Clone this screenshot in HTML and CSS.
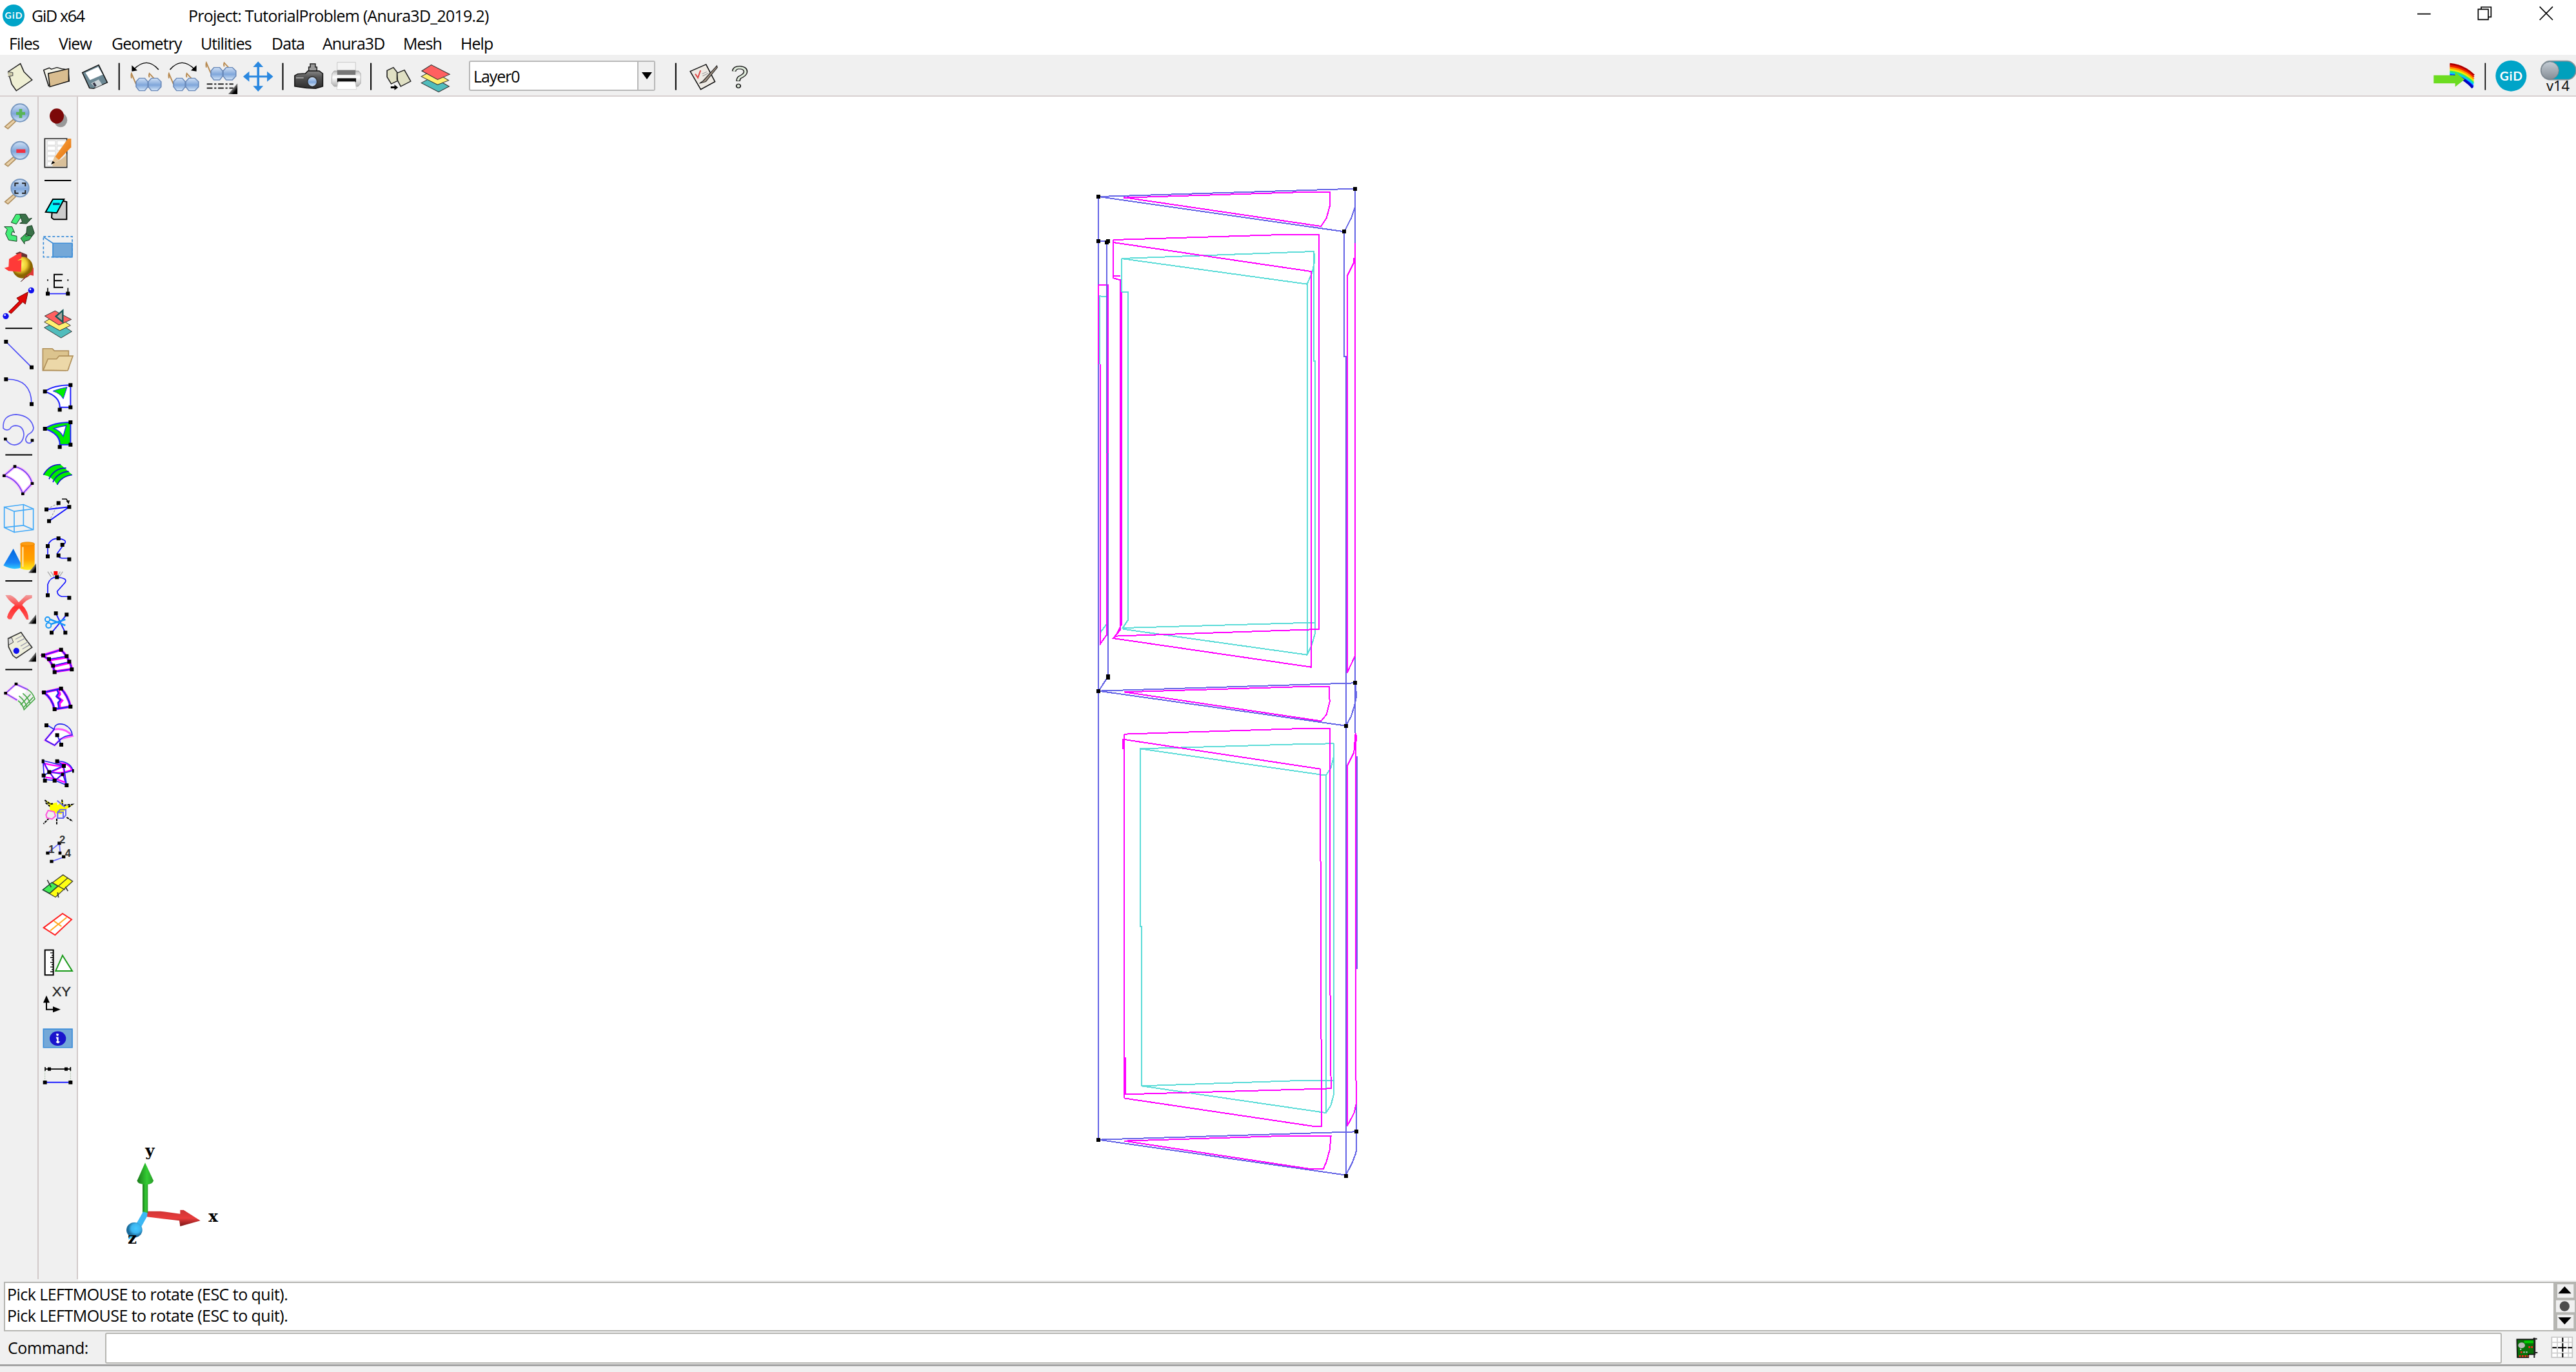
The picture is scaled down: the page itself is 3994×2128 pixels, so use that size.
FILE: index.html
```html
<!DOCTYPE html>
<html lang="en">
<head>
<meta charset="utf-8">
<title>GiD x64</title>
<link rel="stylesheet" href="styles.css">
</head>
<body>
<svg class="defs" aria-hidden="true">
  <defs>
    <linearGradient id="lens" x1="0" y1="0" x2="0" y2="1"><stop offset="0" stop-color="#cfe0f5"/><stop offset=".55" stop-color="#7fa6da"/><stop offset="1" stop-color="#d5e6f8"/></linearGradient>
    <linearGradient id="cone" x1="0" y1="0" x2="0" y2="1"><stop offset="0" stop-color="#06d"/><stop offset=".7" stop-color="#1b84f5"/><stop offset="1" stop-color="#2cc8ff"/></linearGradient>
    <linearGradient id="cyl" x1="0" y1="0" x2="0" y2="1"><stop offset="0" stop-color="#ff8c00"/><stop offset=".6" stop-color="#ffa200"/><stop offset="1" stop-color="#ffee20"/></linearGradient>
    <linearGradient id="cross" x1="0" y1="0" x2="0" y2="1"><stop offset="0" stop-color="#f0a0a0"/><stop offset=".5" stop-color="#ff3030"/><stop offset="1" stop-color="#f55"/></linearGradient>
    <linearGradient id="corner" x1="0" y1="0" x2="1" y2="1"><stop offset=".4" stop-color="#aaa"/><stop offset=".75" stop-color="#000"/></linearGradient>
    <linearGradient id="pencil" x1="0" y1="0" x2="1" y2="1"><stop offset="0" stop-color="#ffb050"/><stop offset="1" stop-color="#e06800"/></linearGradient>
    <linearGradient id="knob" x1="0" y1="0" x2="0" y2="1"><stop offset="0" stop-color="#c4ccd4"/><stop offset="1" stop-color="#858d95"/></linearGradient>
    <linearGradient id="printer" x1="0" y1="0" x2="0" y2="1"><stop offset="0" stop-color="#bbb"/><stop offset=".4" stop-color="#fff"/><stop offset="1" stop-color="#b0b0b0"/></linearGradient>
    <linearGradient id="camera" x1="0" y1="0" x2="0" y2="1"><stop offset="0" stop-color="#888"/><stop offset=".35" stop-color="#555"/><stop offset="1" stop-color="#2c2c2c"/></linearGradient>
    <linearGradient id="green" x1="0" y1="0" x2="1" y2="0"><stop offset="0" stop-color="#1a7a1a"/><stop offset=".6" stop-color="#3c3"/><stop offset="1" stop-color="#2a9a2a"/></linearGradient>
    <linearGradient id="red" x1="0" y1="0" x2="0" y2="1"><stop offset="0" stop-color="#c33"/><stop offset=".5" stop-color="#e83c3c"/><stop offset="1" stop-color="#7a1616"/></linearGradient>
    <radialGradient id="sun" cx=".4" cy=".35"><stop offset="0" stop-color="#ffff70"/><stop offset=".6" stop-color="#f0cc30"/><stop offset="1" stop-color="#8a6400"/></radialGradient>
    <radialGradient id="blueball" cx=".6" cy=".4"><stop offset="0" stop-color="#44c8ff"/><stop offset=".6" stop-color="#3cb4ee"/><stop offset="1" stop-color="#1a6a9a"/></radialGradient>
    <g id="magnifier">
      <path d="M63 120l-40 34 14 10 36-34z" fill="#e8d0a8" stroke="#b09060" stroke-width="5"/>
      <circle cx="93" cy="90" r="41" fill="url(#lens)" stroke="#7898c0" stroke-width="6"/>
    </g>
    <g id="glasses">
      <path d="M533 392l-18-50q-2 6 0 22M607 370l-22-28q-3 8 0 18" fill="none" stroke="#b88a50" stroke-width="5"/>
      <path d="M545 364h22l12 16v24l-12 18h-22l-12-18v-24zM593 364h24l14 16v24l-14 18h-24l-12-18v-24z" fill="url(#lens)" stroke="#6888b8" stroke-width="4"/>
    </g>
    <g id="stack">
      <path d="M206 1090l78 48 50-30-70-46z" fill="#50bcbc"/><path d="M206 1064l72 40 50-24-70-46z" fill="#fff070"/><path d="M208 1036l66 42 58-26-76-40z" fill="#ff6060"/>
    </g>
  </defs>
</svg>
<div class="window">
  <header class="titlebar">
    <svg class="logo-small" viewBox="0 0 34 40"><ellipse cx="17" cy="20" rx="17" ry="17" fill="#00a4c8"/><text x="17" y="25" text-anchor="middle" textLength="27" class="logo-text" font-size="14">GiD</text></svg>
    <span class="app-name">GiD x64</span>
    <span class="project">Project: TutorialProblem (Anura3D_2019.2)</span>
    <svg class="controls" viewBox="205 0 631 141"><g fill="none" stroke="#000" stroke-width="5"><path d="M205 65h62M488 43h47v48h-47zM502 43V33h46v46h-12M774 31l61 62M835 31l-61 62"/></g></svg>
  </header>
  <nav class="menubar">
    <span class="m-files">Files</span><span class="m-view">View</span><span class="m-geometry">Geometry</span><span class="m-utilities">Utilities</span><span class="m-data">Data</span><span class="m-anura">Anura3D</span><span class="m-mesh">Mesh</span><span class="m-help">Help</span>
  </nav>
  <div class="toolbar">
    <svg class="w1" viewBox="0 255 148 189" preserveAspectRatio="none"><path d="M32 334l48-38 14 38 32 38-62 50-18-30z" fill="#efefd4" stroke="#222" stroke-width="4"/><path d="M32 334l18 4v14l-18 4" fill="#ccc9a8" stroke="#555" stroke-width="3"/></svg>
    <svg class="w2" viewBox="148 255 152 189" preserveAspectRatio="none"><path d="M190 402l-20-76 22-10 8 6 22-8 18 6 26 4 4 56" fill="#f4f4ea" stroke="#111" stroke-width="4"/><path d="M188 342l80-22v58l-74 26z" fill="#d9bd90" stroke="#111" stroke-width="4"/></svg>
    <svg class="w3" viewBox="300 255 145 189" preserveAspectRatio="none"><path d="M322 338l64-36 34 82-54 28-16-2z" fill="#6c8894" stroke="#111" stroke-width="4"/><path d="M334 338l50-27 18 36-50 26z" fill="#fff"/><path d="M356 388l30-18 14 24-26 14z" fill="#ccd4d8"/><path d="M362 388l8-5 8 16-7 5z" fill="#334"/></svg>
    <svg class="w4" viewBox="445 255 45 189" preserveAspectRatio="none"><path d="M467 293v126" stroke="#000" stroke-width="5"/></svg>
    <svg class="w5" viewBox="490 255 157 189" preserveAspectRatio="none"><use href="#glasses"/><path d="M621 324q-46-64-98 0" fill="none" stroke="#000" stroke-width="4"/><path d="M516 304v28l22-4z"/></svg>
    <svg class="w6" viewBox="647 255 148 189" preserveAspectRatio="none"><use href="#glasses" x="147"/><path d="M666 324q46-64 98 0" fill="none" stroke="#000" stroke-width="4"/><path d="M770 304v28l-22-4z"/></svg>
    <svg class="w6" viewBox="795 255 148 189" preserveAspectRatio="none"><use href="#glasses" x="295" y="-50"/><path d="M812 391h104M812 410h104" stroke="#000" stroke-width="5" stroke-dasharray="22 7 8 7"/><path d="M932 388v50h-36z" fill="url(#corner)"/></svg>
    <svg class="w7" viewBox="943 255 142 189" preserveAspectRatio="none"><path d="M1012 300v112M966 356h92" stroke="#2a88e0" stroke-width="9"/><path d="M1012 286l20 26h-40zM1012 426l20-26h-40zM953 356l24-24v48zM1071 356l-24-24v48z" fill="#2a88e0"/></svg>
    <svg class="w8" viewBox="1085 255 50 189" preserveAspectRatio="none"><path d="M1109 293v126" stroke="#000" stroke-width="5"/></svg>
    <svg class="w2" viewBox="1135 255 152 189" preserveAspectRatio="none"><path d="M1210 336v-24h6v-15h20v15h6v24" fill="#999" stroke="#222" stroke-width="4"/><path d="M1155 352l12-8 30-2 10-12h44l14 12v60l-28 10-36-2-46-8z" fill="url(#camera)" stroke="#111" stroke-width="4"/><path d="M1160 362h30" stroke="#aaa" stroke-width="5"/><ellipse cx="1224" cy="380" rx="21" ry="26" fill="#333"/><ellipse cx="1224" cy="380" rx="17" ry="21" fill="url(#lens)"/></svg>
    <svg class="w7" viewBox="1289 255 142 189" preserveAspectRatio="none"><path d="M1304 342l8-12h96l8 12v46l-10 14h-94l-10-14z" fill="url(#printer)" stroke="#999" stroke-width="2"/><path d="M1324 290h72v38h-72z" fill="#f4f4f4" stroke="#bbb" stroke-width="2"/><path d="M1324 326h72v22h-72z" fill="#777"/><path d="M1324 364h74v18h-74z" fill="#111"/><path d="M1328 380h66l6 36h-78z" fill="#fff" stroke="#ccc" stroke-width="2"/></svg>
    <svg class="w8" viewBox="1431 255 49 189" preserveAspectRatio="none"><path d="M1456 293v126" stroke="#000" stroke-width="5"/></svg>
    <svg class="w9" viewBox="13 255 147 189" preserveAspectRatio="none"><path d="M50 328l24-14 14 22 2 40-24 14-16-32zM88 340l28-14 24 52-38 24-14-32z" fill="#e0e0c4" stroke="#222" stroke-width="4"/><path d="M64 402h14v-8l14 13-14 12v-8H64z"/></svg>
    <svg class="w10" viewBox="160 255 170 189" preserveAspectRatio="none"><g stroke="#333" stroke-width="3"><path d="M180 386l66 42 40-26-64-44z" fill="#50bcbc"/><path d="M180 356l62 38 42-20-62-46z" fill="#fff070"/><path d="M182 330l60 40 46-24-70-44z" fill="#ff6060"/></g></svg>
    <div class="combo"><span>Layer0</span><i><svg viewBox="0 0 26 55"><path d="M5 22h16l-8 11z"/></svg></i></div>
    <svg class="w11" viewBox="1070 255 260 189" preserveAspectRatio="none"><path d="M1148 293v126" stroke="#000" stroke-width="5"/><path d="M1203 332l60-32 34 80-54 36z" fill="#eeeae4" stroke="#111" stroke-width="4"/><path d="M1222 344l10 18 10-34" fill="none" stroke="#d44" stroke-width="5"/><path d="M1248 344l18-10M1250 354l22-14" stroke="#999" stroke-width="3"/><path d="M1304 306l-52 70-14 12 24-8 44-66z" fill="#a09080" stroke="#222" stroke-width="3"/></svg>
    <svg class="w12" viewBox="1330 255 110 189" preserveAspectRatio="none"><path d="M1369 332q2-18 22-18 22 2 22 20 0 14-22 26-6 6-6 18" fill="none" stroke="#111" stroke-width="16"/><path d="M1369 332q2-18 22-18 22 2 22 20 0 14-22 26-6 6-6 16" fill="none" stroke="#dfeadb" stroke-width="9"/><ellipse cx="1386" cy="400" rx="8" ry="9" fill="#dfeadb" stroke="#111" stroke-width="4"/></svg>
    <svg class="right-tools" viewBox="270 255 672 189" preserveAspectRatio="none">
      <g fill="none" stroke-width="11"><path d="M355 299q60 4 112 52" stroke="#b00000"/><path d="M355 308q60 4 111 52" stroke="#f02000"/><path d="M355 317q60 4 111 52" stroke="#ff9800"/><path d="M355 326q60 4 110 52" stroke="#f0f000"/><path d="M355 334q60 4 110 52" stroke="#30e870"/><path d="M355 342q60 4 109 52" stroke="#00c8ff"/><path d="M355 350q60 4 108 52" stroke="#1030ff"/><path d="M372 352q50 10 90 56" stroke="#0000c0"/></g>
      <path d="M280 350h100v-14l44 34-44 34v-16H280z" fill="#6cdc20"/><path d="M520 293v126" stroke="#000" stroke-width="5"/><circle cx="640" cy="353" r="72" fill="#00a4c8"/><text x="640" y="374" text-anchor="middle" textLength="106" class="logo-text" font-size="58">GiD</text><rect x="779" y="284" width="163" height="87" rx="43" fill="#00a0bc" stroke="#8a949c" stroke-width="5"/><circle cx="821" cy="328" r="41" fill="url(#knob)" stroke="#78828a" stroke-width="3"/><text x="804" y="424" textLength="108" class="version" font-size="66">v14</text></svg>
  </div>
  <main class="workspace">
    <aside class="tools">
      <svg viewBox="0 18 177 174"><use href="#magnifier"/><path d="M96 72v42M75 93h42" stroke="#58b458" stroke-width="14"/></svg>
      <svg viewBox="0 192 177 174"><use href="#magnifier" y="175"/><path d="M76 268h42" stroke="#f03040" stroke-width="17"/></svg>
      <svg viewBox="0 366 177 174"><use href="#magnifier" y="350"/><path d="M70 432v-14h16M102 418h16v14M118 450v14h-16M86 464H70v-14" fill="none" stroke="#222" stroke-width="6"/></svg>
      <svg viewBox="0 540 177 174"><g stroke="#163b20" stroke-width="3"><path d="M52 600l22-38h46l-18 6-26 40z" fill="#44ee78"/><path d="M92 562h28l14 22 14-4-24 26-32-2 12-6z" fill="#3a7048"/><path d="M20 620h36l12 28-10-6-6 16 26 6v24l-38-6-14-30 8-20z" fill="#44ee78"/><path d="M96 674l26-24-2 14 34-8-18 26-22 6v12z" fill="#38b458"/><path d="M126 620l22-6 12 36-12 14-26-8z" fill="#3a7048"/></g></svg>
      <svg viewBox="0 714 177 174"><path d="M72 744l20-8 34 14 2 40z" fill="#633"/><ellipse cx="105" cy="810" rx="48" ry="50" fill="url(#sun)"/><path d="M20 812l20-6 2-36 40-24 18-4v24l-20 12 20-4-2 56-58-4z" fill="#ff3a38"/><path d="M156 808v40l-20-4-38 32 20-26 26-18z" fill="#e03838"/><path d="M96 876l30-28" stroke="#333" stroke-width="3"/></svg>
      <svg viewBox="0 888 177 174"><path d="M40 1016l50-50-12-14 52-28-12 56-12-10-54 54z" fill="#e00808" stroke="#700" stroke-width="3"/><circle cx="27" cy="1036" r="14" fill="#11e"/><circle cx="23" cy="1031" r="4" fill="#fff"/><circle cx="145" cy="916" r="14" fill="#11e"/><circle cx="141" cy="911" r="4" fill="#fff"/></svg>
      <svg class="rule" viewBox="0 1062 177 66"><path d="M25 1093h125" stroke="#000" stroke-width="6"/></svg>
      <svg viewBox="0 1128 177 174"><path d="M28 1155l119 119" stroke="#4848f8" stroke-width="5"/><path d="M19 1146h18v18H19zM138 1265h18v18h-18z"/></svg>
      <svg viewBox="0 1302 177 174"><path d="M28 1330q118-4 119 115" fill="none" stroke="#4848f8" stroke-width="5"/><path d="M19 1321h18v18H19zM138 1436h18v18h-18z"/></svg>
      <svg viewBox="0 107.400 177 168.400"><path d="M25 236q18 28 42 28 40-4 44-48-2-42-40-42-18 2-24 14-16 14-32-2-4-62 60-64 70 6 81 62 0 18-26 32-20 26-2 38 18 6 22-12" fill="none" stroke="#5a5af4" stroke-width="5"/><path d="M18 230h14v13H18zM143 236h14v13h-14z"/></svg>
      <svg class="rule" viewBox="0 275.900 177 63.900"><path d="M25 306h125" stroke="#000" stroke-width="6"/></svg>
      <svg viewBox="0 339.800 177 168.400"><path d="M19 399l50-42q62 16 81 78l-44 48q-24-66-87-84z" fill="#fff" stroke="#f9f" stroke-width="12"/><path d="M19 399l50-42q62 16 81 78l-44 48q-24-66-87-84z" fill="none" stroke="#44e" stroke-width="4"/><path d="M12 393h14v13H12zM62 350h14v13H62zM143 429h14v13h-14zM99 477h14v13H99z"/></svg>
      <svg viewBox="0 508.200 177 168.400"><path d="M20 540l46 20v97l-46-22zM66 560l89-12v97l-89 12M20 540l89-12 46 20M109 528v97l46 20M109 625l-89 10" fill="none" stroke="#44aaf8" stroke-width="5"/></svg>
      <svg viewBox="0 676.600 177 168.400"><path d="M62 728l44 86q-46 18-90-8z" fill="url(#cone)"/><path d="M95 706v114q34 14 66 0V706z" fill="url(#cyl)"/><ellipse cx="128" cy="706" rx="33" ry="9" fill="#ff9c10" stroke="#d88000" stroke-width="2"/><path d="M106 720v92" stroke="#ffdc90" stroke-width="8"/><path d="M168 796v44h-36z" fill="url(#corner)"/></svg>
      <svg class="rule" viewBox="0 845 177 63.900"><path d="M25 874h125" stroke="#000" stroke-width="6"/></svg>
      <svg viewBox="0 909 177 168.400"><path d="M25 936h24q22 10 38 34l34-34h28v14q-26 8-46 32 30 30 30 68h-10q-14-26-34-52-22 20-36 50-16 4-20-10 8-30 36-56-30-20-44-46z" fill="url(#cross)"/><path d="M168 1026v44h-36z" fill="url(#corner)"/></svg>
      <svg viewBox="0 1077.400 177 168.400"><path d="M38 1132l60-28 22 32 29 38-73 50-16-12-20-40z" fill="#efefdc" stroke="#333" stroke-width="5"/><path d="M72 1136l34-18M80 1150l36-18M96 1168l34-20M104 1182l34-20" stroke="#99a" stroke-width="4"/><path d="M40 1134l14-6 8 22-20 12" fill="#ddd" stroke="#444" stroke-width="3"/><circle cx="76" cy="1190" r="14" fill="#11e"/><path d="M168 1196v44h-36z" fill="url(#corner)"/></svg>
      <svg class="rule" viewBox="0 1245.800 177 63.900"><path d="M25 1273h125" stroke="#000" stroke-width="6"/></svg>
      <svg viewBox="0 1309.700 177 168.400"><path d="M80 1412l-54-32 48-43 56 26" fill="#fff" stroke="#f8f" stroke-width="10"/><path d="M80 1412l-54-32 48-43 56 26" fill="none" stroke="#55e" stroke-width="4"/><path d="M84 1414q20 14 28 42l50-50q-10-30-34-44M96 1434l46-50M108 1448l46-50M88 1392q28 22 36 50M106 1380q26 22 34 46" fill="none" stroke="#48a848" stroke-width="5"/><path d="M19 1373h14v13H19zM68 1330h14v13H68z"/></svg>
    </aside>
    <aside class="tools tools-b">
      <svg class="t58" viewBox="180 18 177 174"><ellipse cx="282" cy="124" rx="31" ry="33" fill="#999"/><ellipse cx="264" cy="105" rx="33" ry="35" fill="#7c0808"/></svg>
      <svg class="t58" viewBox="180 192 177 174"><path d="M208 210h103v134H208z" fill="#eee" stroke="#222" stroke-width="5"/><path d="M220 220h38v20h-38zM266 220h38v20h-38zM220 246h38v18h-38zM266 246h38v18h-38zM220 270h38v18h-38zM220 294h34v18h-34zM220 318h38v18h-38z" fill="#fff" stroke="#ccc" stroke-width="2"/><path d="M244 326q50-20 66-44v58h-66z" fill="#d9c09a"/><path d="M240 328l16-34 60-84h15v40l-56 58z" fill="url(#pencil)"/><path d="M240 328l14-36 22 18z" fill="#e6c69a"/><path d="M237 331l8-17 11 8z"/></svg>
      <svg class="rule29" viewBox="180 366 177 87"><path d="M207 405h124" stroke="#000" stroke-width="6"/></svg>
      <svg viewBox="180 453 177 175.200"><path d="M246 500l14-8 50 12v82h-60l-10-8z" fill="#ccc" stroke="#000" stroke-width="6"/><path d="M212 552l34-60h52l-34 64z" fill="#00f8f8" stroke="#000" stroke-width="6"/><path d="M246 514h32" stroke="#047" stroke-width="10"/></svg>
      <svg viewBox="180 628.200 177 175.200"><path d="M202 667h134v95H202z" fill="none" stroke="#3a8cd8" stroke-width="5" stroke-dasharray="12 9"/><path d="M204 670l42 28" stroke="#3a8cd8" stroke-width="5"/><path d="M246 698h90v64h-90z" fill="#74a8d8" stroke="#3a8cd8" stroke-width="5"/></svg>
      <svg viewBox="180 803.400 177 175.200"><path d="M292 842h-40v60h42M252 870h36" fill="none" stroke="#000" stroke-width="6"/><path d="M222 864v8M316 864v8M222 904v20M316 904v20" stroke="#000" stroke-width="5"/><path d="M222 931h94" stroke="#22f" stroke-width="5"/><path d="M213 922h18v18h-18zM307 922h18v18h-18z"/></svg>
      <svg viewBox="180 978.600 177 175.200"><g stroke="#333" stroke-width="3"><use href="#stack"/></g><path d="M292 1010v54l-32-26z" fill="#a8a8a0" stroke="#165858" stroke-width="7"/></svg>
      <svg viewBox="180 1153.800 177 175.200"><path d="M199 1186h44l10 10h66v84l-12 8H199z" fill="#dcc48e" stroke="#b0905a" stroke-width="5"/><path d="M201 1286l22-52h40l12-14h64l-24 68z" fill="#ecd8a8" stroke="#b0905a" stroke-width="5"/></svg>
      <svg viewBox="180 -34.800 177 169.600"><path d="M209 20q40-30 119-30v104h-50q2-50-69-74z" fill="#fff" stroke="#22f" stroke-width="6"/><path d="M246 18q32-12 66-18l-18 54q-14-26-48-36z" fill="#0e0" stroke="#22f" stroke-width="3"/><path d="M200 11h18v18h-18zM319-19h18v18h-18zM319 85h18v18h-18zM269 96h18v18h-18z"/></svg>
      <svg viewBox="180 134.700 177 169.600"><path d="M209 189q40-30 119-30v104h-50q2-50-69-74z" fill="#0e0" stroke="#22f" stroke-width="6"/><path d="M250 188q32-10 58-14l-14 50q-14-26-44-36z" fill="#fff" stroke="#22f" stroke-width="4"/><path d="M200 180h18v18h-18zM319 150h18v18h-18zM319 254h18v18h-18zM269 265h18v18h-18z"/></svg>
      <svg viewBox="180 304.300 177 169.600"><path d="M202 396q28-50 80-48l54 48q-44 6-70 46-24-40-64-46z" fill="#0e0"/><path d="M202 396q28-50 80-48M228 416q24-52 80-52M246 430q22-46 74-50M266 442q20-40 70-46" fill="none" stroke="#11c" stroke-width="5"/></svg>
      <svg viewBox="180 473.900 177 169.600"><path d="M228 608l44-84-56 28" fill="none" stroke="#aaa" stroke-width="4" stroke-dasharray="10 6"/><path d="M216 553l106-12-94 66" fill="none" stroke="#11f" stroke-width="6"/><path d="M288 504h20l10 14" fill="none" stroke="#000" stroke-width="5"/><path d="M207 544h18v18h-18zM263 514h18v18h-18zM313 532h18v18h-18zM219 598h18v18h-18zM308 514l16-4-4 18z"/></svg>
      <svg viewBox="180 643.500 177 169.600"><path d="M222 764v-48q10-36 50-36 44 8 28 24l-34 46q2 20 22 22h34" fill="none" stroke="#11f" stroke-width="5"/><path d="M213 707h18v18h-18zM263 671h18v18h-18zM281 701h18v18h-18zM213 755h18v18h-18zM263 750h18v18h-18zM313 768h18v18h-18z"/></svg>
      <svg viewBox="180 813.100 177 169.600"><path d="M222 830l16 24M236 830l16 24M292 830l-16 24M280 830l-14 24" stroke="#aaa" stroke-width="4"/><path d="M222 940v-50q10-34 40-34 62 4 36 30l-32 36q2 20 22 24h34" fill="none" stroke="#11f" stroke-width="5"/><path d="M213 931h18v18h-18zM256 847h18v18h-18zM313 943h18v18h-18z"/><path d="M250 828h18v18h-18z" fill="red"/></svg>
      <svg viewBox="180 982.700 177 169.600"><path d="M260 1020l44 90M310 1026l-70 84" stroke="#22f" stroke-width="6"/><circle cx="221" cy="1048" r="11" fill="none" stroke="#1898f8" stroke-width="6"/><circle cx="226" cy="1076" r="12" fill="none" stroke="#1898f8" stroke-width="6"/><path d="M234 1048l70 28M238 1070l66-22" stroke="#1898f8" stroke-width="8"/><path d="M251 1011h18v18h-18zM301 1017h18v18h-18zM231 1101h18v18h-18zM295 1101h18v18h-18z"/></svg>
      <svg viewBox="180 1152.300 177 169.600"><path d="M200 1208l84-26q40 40 50 90l-80 12q-10-50-54-76zM228 1230l82-14M246 1260l76-18" fill="#fff" stroke="#f0f" stroke-width="12"/><path d="M200 1208l84-26q40 40 50 90l-80 12q-10-50-54-76zM228 1226l82-14M246 1256l76-18" fill="none" stroke="#22e" stroke-width="5"/><path d="M192 1199h18v18h-18zM275 1173h18v18h-18zM301 1203h18v18h-18zM313 1228h18v18h-18zM325 1264h18v18h-18zM245 1277h18v18h-18zM219 1216h18v18h-18zM238 1247h18v18h-18z"/></svg>
      <svg viewBox="180 1321.900 177 169.600"><path d="M204 1376l80-18q32 34 44 84l-75 12q-10-50-49-78zM272 1366l6 18-10 14 20 16-12 14 2 20" fill="#fff" stroke="#f0f" stroke-width="12"/><path d="M204 1376l80-18q32 34 44 84l-75 12q-10-50-49-78zM264 1362l8 18-10 14 20 16-12 14 4 26" fill="none" stroke="#22e" stroke-width="7"/><path d="M195 1367h18v18h-18zM275 1349h18v18h-18zM319 1433h18v18h-18zM245 1445h18v18h-18z"/></svg>
      <svg viewBox="180 -44.300 177 157.900"><path d="M210 52l42-50q50-10 84 30l-54 14-28 30z" fill="#fff" stroke="#f5f" stroke-width="9"/><path d="M210 52l42-50-36-22M252 0q4-32 48-20 34 16 36 48-36 2-54 20l-28 28-44-24M266 28l18 44" fill="none" stroke="#22e" stroke-width="5"/><path d="M207-26h18v18h-18zM257 20h18v18h-18zM276 64h18v18h-18z"/></svg>
      <svg viewBox="180 113.500 177 157.900"><path d="M202 134l64 8q60 0 72 34l-44 6 12 54-98-22z" fill="#fff"/><path d="M202 140q50 14 94 14l-66 32-26-44M264 138q60 0 70 34l-44 12-58 0 26 36 34-30M212 206l44 6 48 18-10-76" fill="none" stroke="#f0f" stroke-width="7"/><path d="M200 128l6 88 50 4 54 22-18-50-64-12-22 18M200 128l28 54 68-30-30-22q60 2 74 44l-48 14-34 32-28-38M200 128l96 24 14 90" fill="none" stroke="#22e" stroke-width="5"/><path d="M194 122h12v18h-12zM257 122h18v18h-18zM288 144h18v18h-18zM220 172h18v18h-18zM194 188h18v18h-18zM200 212h18v18h-18zM245 212h18v18h-18zM301 234h18v18h-18zM284 184h14v16h-14zM336 168h8v16h-8z"/></svg>
      <svg viewBox="180 271.400 177 157.900"><path d="M210 296l32 16 22-6 4 14 26-24-4 30 48-8-36 24-18 20-50-10-4-30z" fill="#ff0"/><path d="M208 296l26 18 16-2M288 294l4 26 44-4-20 14M228 380l-26 26M264 382v26M310 376l28 18M212 308l20 16" fill="none" stroke="#000" stroke-width="6" stroke-dasharray="12 4"/><path d="M214 364l10-20 28 6 6 20-16 14-24-6z" fill="#eee" stroke="#f5d" stroke-width="6"/><path d="M268 352h26v28h-26zM268 352l12-12h26v26l-12 14M266 298l36 30" fill="none" stroke="#66e" stroke-width="6"/></svg>
      <svg viewBox="180 429.200 177 157.900"><path d="M222 522l54-44 4 44M240 562l56-20" fill="none" stroke="#66f" stroke-width="5"/><path d="M214 516h16v14h-16zM268 470h16v14h-16zM272 516h14v14h-14zM232 555h16v14h-16zM288 533h16v14h-16z"/><g class="num" font-size="50"><text x="276" y="478">2</text><text x="226" y="524">1</text><text x="302" y="540">4</text></g></svg>
      <svg viewBox="180 587.100 177 157.900"><path d="M199 678l94-70 45 30-80 74z" fill="#ff1" stroke="#443" stroke-width="4"/><path d="M199 678l42-34 28 16-38 34z" fill="#4e5" stroke="#143" stroke-width="4"/><path d="M232 694l84-72M242 644l60 34" stroke="#443" stroke-width="4"/><path d="M220 632l18 34M304 664l12 20M268 690l4 24" stroke="#333" stroke-width="5"/></svg>
      <svg viewBox="180 744.900 177 157.900"><path d="M203 838l88-66 42 28-77 72z" fill="#fff" stroke="#f22" stroke-width="6"/><path d="M234 852l76-62M250 806l36 26" stroke="#fa2" stroke-width="6"/></svg>
      <svg viewBox="180 902.800 177 157.900"><path d="M209 923h39v116h-39z" fill="#fff" stroke="#000" stroke-width="6"/><path d="M234 936h12M240 947h8M234 958h12M240 969h8M234 980h12M240 991h8M234 1002h12M240 1013h8M234 1024h12" stroke="#000" stroke-width="4"/><path d="M291 948l45 72h-77z" fill="#fff" stroke="#1a9a1a" stroke-width="6"/></svg>
      <svg viewBox="180 1060.600 177 157.900"><path d="M216 1140v43h40" fill="none" stroke="#000" stroke-width="6"/><path d="M216 1118l15 34h-30zM282 1183l-36-14v28z"/><text x="242" y="1122" class="xy" font-size="60" textLength="88" lengthAdjust="spacingAndGlyphs">XY</text></svg>
      <svg viewBox="180 1218.500 177 157.900"><path d="M202 1255h134v86H202z" fill="#74a8d8" stroke="#3a8cd8" stroke-width="5"/><ellipse cx="269" cy="1299" rx="38" ry="34" fill="#1a14cc"/><path d="M262 1276l12 2-4 10-8-3zM260 1292l12 0 0 20 8 2-10 8-10-6 6-8z" fill="#fff"/></svg>
      <svg viewBox="180 1376.400 177 157.900"><path d="M210 1425h118M210 1416v18M328 1416v18" stroke="#000" stroke-width="5"/><path d="M209 1436v44M328 1436v44" stroke="#8a8" stroke-width="3" stroke-dasharray="4 6"/><path d="M209 1487h119" stroke="#22f" stroke-width="6"/><path d="M200 1479h18v17h-18zM319 1479h18v17h-18zM222 1417h15v16h-15zM300 1417h15v16h-15z"/></svg>
    </aside>
    <svg class="canvas" viewBox="121 150 3873 1836">
      <g transform="translate(1680 270) scale(.33333)" fill="none" stroke-width="6" shape-rendering="crispEdges">
        <path class="blue" d="M70 105V4493M70 105L1264 68V320M70 105L1213 268M1264 68V150L1245 205 1213 268V850H1220V4661M70 312H113M70 2405L113 2340M1264 2240V2600M70 2405L1264 2368M70 2405L1220 2567M1264 2368L1270 2430 1258 2480 1244 2525 1220 2567M70 4493L1270 4456M70 4493L1220 4658L1250 4600 1265 4560 1270 4540V4330"/>
        <g class="cyan">
          <path d="M76 885V568L108 572M80 2130L107 2095"/>
          <path d="M176 393L1070 360V870H1076V2140L1062 2190 1040 2237 182 2117M176 393L1040 512V2237M1070 372H1075V405L1064 455 1040 512M176 393V549H208V2073L182 2112 1030 2088H1076"/>
          <path d="M1163 2650L1025 2652 264 2674V3500H270V4243L1005 4218H1163M264 2674L1127 2798V4368L270 4243M1163 2650V4285L1150 4335 1127 4368M1163 2715L1150 2765 1127 2798"/>
        </g>
        <g class="magenta">
          <path d="M185 110L1055 83H1145V150L1130 205 1105 243 185 108"/>
          <path d="M138 306L955 281H1096V2118L145 2150M138 318L1058 453V2294L138 2160 172 2120V493L138 484V306M140 474H172M177 550V2095L150 2148"/>
          <path d="M70 517H114V1300M107 1300V2145L77 2187V885M70 517V885M1264 320V2240L1226 2320V475L1258 410V390"/>
          <path d="M190 2410L1055 2384H1142L1145 2455 1130 2515 1105 2545 190 2410"/>
          <path d="M188 2606L1017 2580H1145V3500L1151 4255L195 4282V4110M188 2606V4298M183 2675V2630L1101 2768 1107 4430H1065L188 4300"/>
          <path d="M1226 4430V2755L1258 2690 1265 2600V4110L1270 4320 1258 4370 1226 4430M1270 2610V2640"/>
          <path d="M190 4499L955 4475H1151L1145 4540 1130 4595 1115 4630H1060L190 4499"/>
        </g>
        <path class="blue" d="M109 312V1300M113 1300V2340M70 885V2405M1271 2710V3700"/>
        <path class="nodes" d="M61 96h18v18H61zM1255 59h18v18h-18zM1204 259h18v18h-18zM61 303h18v18H61zM104 303h18v18h-18zM98 309h18v18H98zM104 2327h18v24h-18zM61 2396h18v18H61zM1254 2359h18v18h-18zM1211 2558h18v18h-18zM61 4484h18v18H61zM1261 4447h18v18h-18zM1211 4652h18v18h-18z"/>
      </g>
      <g transform="translate(150 1750) scale(.33333)">
        <path d="M232 386l64 0 92 12v-18h16l78 50-94 26-4-26-152-18z" fill="url(#red)"/>
        <path d="M213 255h25v140h-25z" fill="url(#green)"/><path d="M225 160l39 84q-4 18-38 18-36-2-38-18z" fill="url(#green)"/>
        <path d="M216 388l20 6-2 16-30 54-22-16z" fill="#3cb8f4"/><ellipse cx="175" cy="473" rx="37" ry="35" fill="url(#blueball)"/><path d="M148 500h34l-34 18z" fill="#44c8ff"/>
        <g class="axis" font-size="74"><text x="226" y="128">y</text><text x="520" y="436">x</text><text x="144" y="536">z</text></g>
      </g>
    </svg>
  </main>
  <section class="console">
    <div class="log"><p>Pick LEFTMOUSE to rotate (ESC to quit).</p><p>Pick LEFTMOUSE to rotate (ESC to quit).</p></div>
    <svg class="scroll" viewBox="495 54 105 231"><path d="M495 54h105v231H495z" fill="#b6b6b2"/><path d="M513 66h76v62h-76zM507 140h87v56h-87zM513 208h76v63h-76z" fill="#f0f0f0"/><path d="M547 76l31 33h-61zM547 253l31-33h-61z"/><circle cx="547" cy="168" r="23" fill="#4c4c4c"/></svg>
  </section>
  <footer class="command">
    <label>Command:</label><div class="input"></div>
    <svg class="status" viewBox="258 288 342 147"><path d="M328 322h84v70h-30v14h-52z" fill="#087008" stroke="#111" stroke-width="5"/><path d="M362 328h44v12h-44z" fill="#0c0"/><ellipse cx="350" cy="350" rx="16" ry="13" fill="#bbb"/><path d="M382 358h8M394 358h8M345 382h8M338 400h44" stroke="#f22" stroke-width="8" stroke-dasharray="8 5"/><path d="M358 382h24M342 368h10" stroke="#ccc" stroke-width="6" stroke-dasharray="7 5"/><path d="M404 318l18 2M409 314v94M414 384h10" stroke="#222" stroke-width="6"/><path d="M490 312h96v94h-96z" fill="#fff" stroke="#c4c4c4" stroke-width="5"/><path d="M516 312v94M568 312v94M490 336h96M490 386h96" stroke="#ccc" stroke-width="5"/><path d="M541 314v92M493 361h92" stroke="#000" stroke-width="6" stroke-dasharray="20 6 40 6"/></svg>
  </footer>
</div>
</body>
</html>
```
FILE: styles.css
```css
* { box-sizing: border-box; }
body { margin: 0; background: #f0f0f0; color: #000; font: 25px "Open Sans", "Noto Sans", sans-serif; }
svg { display: block; overflow: visible; flex: none; }
.defs { position: absolute; width: 0; height: 0; }
.window { width: 3994px; height: 2128px; display: flex; flex-direction: column; overflow: hidden; background: #f0f0f0; white-space: nowrap; letter-spacing: -0.76px; }

.titlebar { height: 47px; background: #fff; display: flex; align-items: center; padding-left: 4px; flex: none; }
.logo-small { width: 34px; height: 40px; }
.logo-text { font-family: Lato, sans-serif; font-weight: 700; fill: #fff; letter-spacing: 0; }
.app-name { margin-left: 11px; width: 243px; letter-spacing: -1.3px; }
.controls { width: 210.300px; height: 47px; margin-left: auto; margin-right: 36px; }

.menubar { height: 38px; background: #fff; display: flex; align-items: center; padding: 2px 0 0 14px; flex: none; letter-spacing: -0.95px; }
.m-files { width: 77px; }
.m-view { width: 82px; }
.m-geometry { width: 138px; }
.m-utilities { width: 110px; }
.m-data { width: 79px; }
.m-anura { width: 125px; }
.m-mesh { width: 89px; }

.toolbar { height: 65px; display: flex; flex: none; border-bottom: 2px solid #d8d0d0; }
.toolbar > svg { height: 63px; }
.w1 { width: 58.500px; }
.w2 { width: 60.100px; }
.w3 { width: 57.300px; }
.w4 { width: 17.800px; }
.w5 { width: 62.100px; }
.w6 { width: 58.500px; }
.w7 { width: 56.100px; }
.w8 { width: 19.800px; }
.w9 { width: 60px; }
.w10 { width: 69.400px; }
.w11 { width: 106px; }
.w12 { width: 45px; }
.combo { width: 289px; height: 47px; margin: 9px 0 0 13px; background: #fff; border: 2px solid #b8b8b8; border-radius: 3px; display: flex; align-items: center; justify-content: space-between; padding-left: 5px; flex: none; letter-spacing: -1.1px; }
.combo i { width: 26px; height: 43px; background: #f0f0f0; border-left: 2px solid #b8b8b8; display: flex; align-items: center; }
.combo svg { width: 26px; height: 55px; }
.toolbar > .right-tools { width: 224px; margin-left: auto; }
.version { font-family: "Noto Sans", sans-serif; fill: #111; letter-spacing: 0; }

.workspace { height: 1836px; display: flex; flex: none; }
.tools { width: 60px; height: 1834px; padding-top: 1px; border-right: 2px solid #d2caca; flex: none; }
.tools svg { width: 59px; height: 58px; }
.tools .rule { height: 22px; }
.tools-b { width: 61px; }
.tools-b svg { height: 58.400px; }
.tools-b .t58 { height: 58px; }
.tools-b .rule29 { height: 29px; }
.num { font-family: "Liberation Sans", sans-serif; font-weight: 700; fill: #333; letter-spacing: 0; }
.xy { font-family: "Liberation Sans", sans-serif; fill: #222; stroke: #222; stroke-width: 1px; letter-spacing: 0; }
.canvas { width: 3873px; height: 1836px; background: #fff; }
.blue { stroke: #6464e6; }
.cyan { stroke: #5cdcd8; }
.magenta { stroke: #f0f; }
.nodes { fill: #000; }
.axis { font-family: "DejaVu Serif", serif; font-weight: 700; fill: #000; letter-spacing: 0; }

.console { height: 78px; margin: 2px 0 0 6px; display: flex; flex: none; }
.console .log { flex: 1; height: 77px; background: #fff; border: 2px solid #b6b6b2; border-right: 0; padding: 1px 0 0 3px; letter-spacing: -0.54px; }
.log p { margin: 0; height: 33px; line-height: 33px; }
.scroll { width: 35px; height: 77px; }
.command { height: 53px; display: flex; align-items: flex-start; padding: 0 0 0 12px; flex: none; border-bottom: 3px solid #a4a4a4; }
.command label { width: 151px; line-height: 49px; letter-spacing: -0.4px; }
.command .input { width: 3716px; height: 48px; margin-top: 1px; background: #fff; border: 2px solid #b6b6b2; border-radius: 3px; }
.status { width: 114px; height: 49px; }
```
